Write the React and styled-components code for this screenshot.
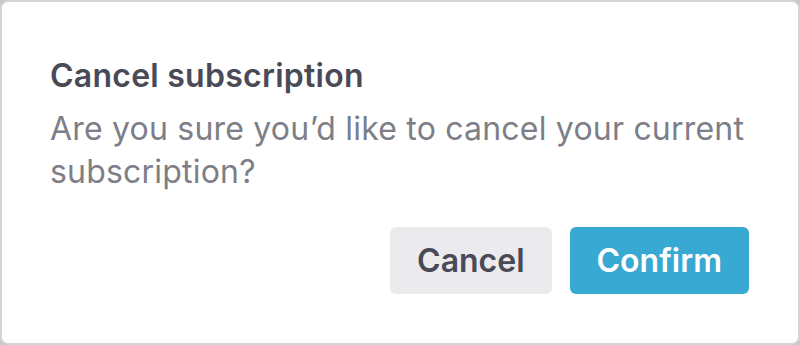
import React from 'react';
import styled, { createGlobalStyle } from 'styled-components';

const GlobalStyle = createGlobalStyle`
  html, body {
    margin: 0;
    padding: 0;
    background: #c9c9cd;
  }
  body {
    font-family: 'Inter', 'Liberation Sans', sans-serif;
  }
`;

const Dialog = styled.div`
  box-sizing: border-box;
  width: 800px;
  height: 345px;
  background: #ffffff;
  border: 2px solid #d4d4d8;
  border-radius: 8px;
  padding: 52px 49px 0 48px;
  display: flex;
  flex-direction: column;
`;

const Title = styled.h2`
  margin: 0;
  font-size: 32px;
  font-weight: 600;
  letter-spacing: 0.25px;
  line-height: 43px;
  color: #4a4a57;
`;

const Message = styled.p`
  margin: 10px 0 0;
  font-size: 32px;
  font-weight: 400;
  letter-spacing: 0.2px;
  line-height: 43px;
  color: #7e7e88;
`;

const Actions = styled.div`
  display: flex;
  justify-content: flex-end;
  gap: 18px;
  margin-top: 34px;
`;

const Button = styled.button`
  box-sizing: border-box;
  height: 67px;
  padding: 0 27px;
  border: none;
  border-radius: 6px;
  font-family: inherit;
  font-size: 32px;
  font-weight: 600;
  background: ${(p) => (p.$primary ? '#38a9d2' : '#ebebee')};
  color: ${(p) => (p.$primary ? '#ffffff' : '#4a4a57')};
  cursor: pointer;
`;

export default function App() {
  return (
    <>
      <GlobalStyle />
      <Dialog>
        <Title>Cancel subscription</Title>
        <Message>
          Are you sure you’d like to cancel your current subscription?
        </Message>
        <Actions>
          <Button>Cancel</Button>
          <Button $primary>Confirm</Button>
        </Actions>
      </Dialog>
    </>
  );
}
